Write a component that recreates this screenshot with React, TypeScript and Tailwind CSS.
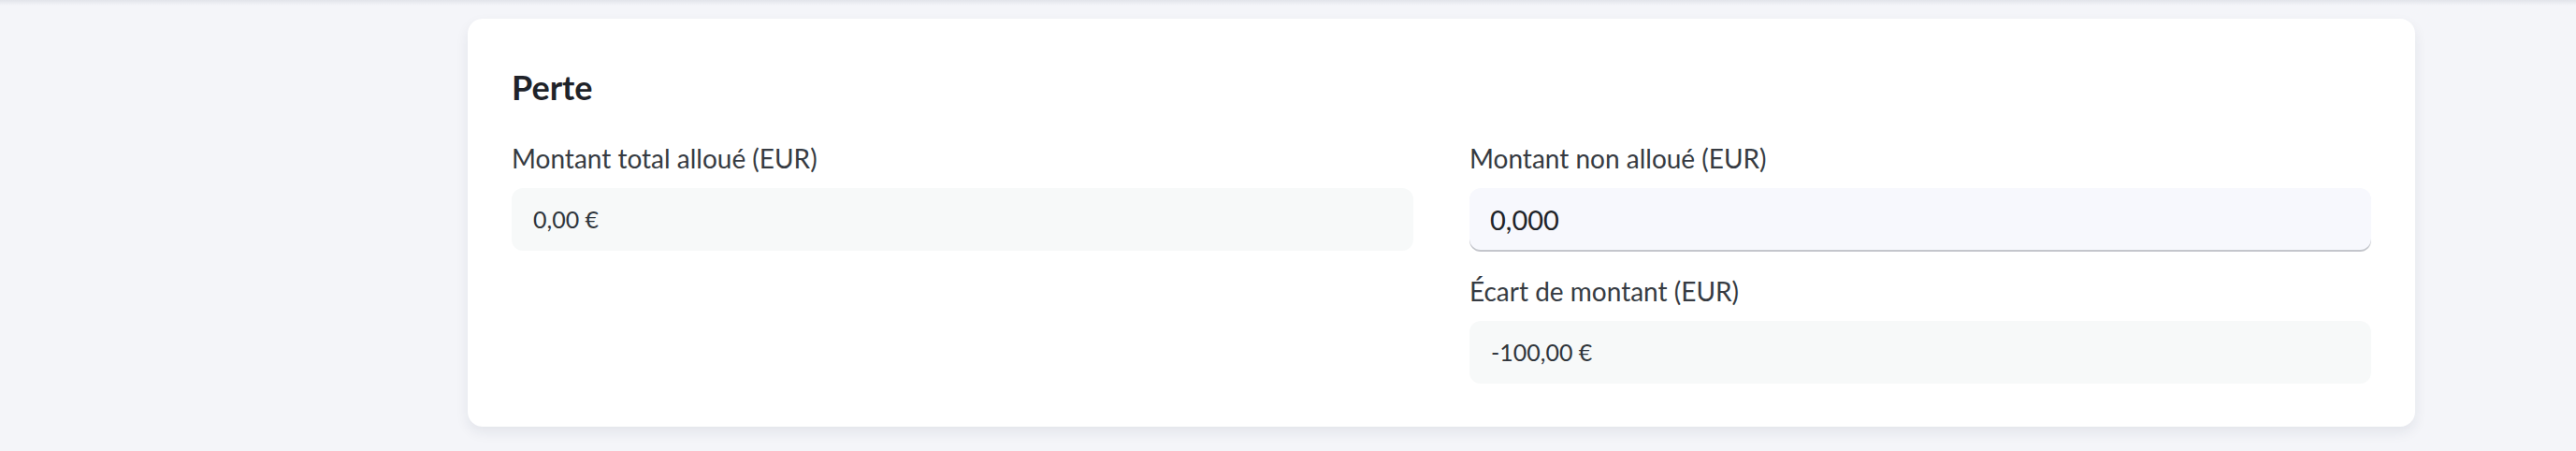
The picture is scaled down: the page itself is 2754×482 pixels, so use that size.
import React from 'react';

const font = { fontFamily: 'Lato, "Open Sans", sans-serif' };

const ReadOnlyField: React.FC<{ label: string; value: string }> = ({ label, value }) => (
  <div className="flex flex-col">
    <label className="text-[28px] leading-[36px] text-[#363b42]">{label}</label>
    <div className="mt-[14px] h-[67px] rounded-[12px] bg-[#f7f9f9] px-[23px] flex items-center text-[25px] text-[#2f353b]">
      {value}
    </div>
  </div>
);

const App: React.FC = () => {
  return (
    <div className="w-[2754px] h-[482px] bg-[#f4f5f9] overflow-hidden" style={font}>
      {/* shadow from the top bar above */}
      <div className="h-[6px] bg-gradient-to-b from-[#e2e4ea] to-[#f4f5f9]" />

      <div className="ml-[500px] mt-[14px] w-[2082px] h-[436px] rounded-[16px] bg-white px-[47px] pt-[55px] shadow-[0_6px_14px_rgba(30,40,70,0.08)]">
        <h2 className="text-[36px] leading-[36px] font-bold text-[#1f2329]">Perte</h2>

        <div className="mt-[40px] grid grid-cols-2 gap-x-[60px]">
          <ReadOnlyField label="Montant total alloué (EUR)" value="0,00 €" />

          <div className="flex flex-col">
            <label className="text-[28px] leading-[36px] text-[#363b42]">Montant non alloué (EUR)</label>
            <input
              readOnly
              value="0,000"
              className="mt-[14px] h-[66px] rounded-[12px] bg-[#f7f8fd] px-[22px] text-[29px] text-[#1f2328] outline-none shadow-[0_2px_0_#c4c6cc]"
              style={font}
            />

            <div className="mt-[26px]">
              <ReadOnlyField label="Écart de montant (EUR)" value="-100,00 €" />
            </div>
          </div>
        </div>
      </div>
    </div>
  );
};

export default App;
